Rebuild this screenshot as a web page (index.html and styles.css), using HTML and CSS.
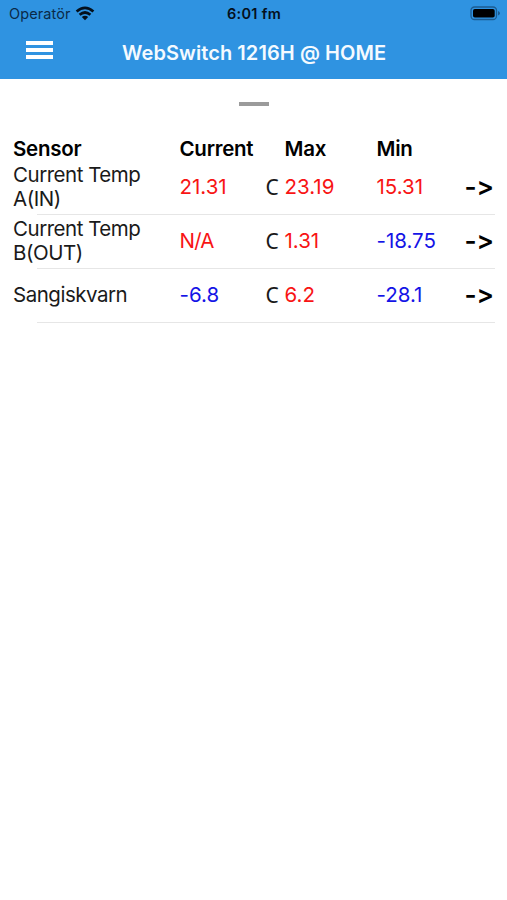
FILE: index.html
```
<!DOCTYPE html>
<html lang="sv">
<head>
    <meta charset="UTF-8">
    <meta name="viewport" content="width=device-width, initial-scale=1.0">
    <title>WebSwitch 1216H</title>
    <link rel="stylesheet" href="styles.css">
</head>
<body>
    <header>
        <div class="status-bar">
            <div class="carrier">
                <span class="carrier-name">Operatör</span>
                <svg class="wifi" width="20" height="16" viewBox="0 0 20 16">
                    <path d="M1.6 5.4Q10 -1.8 18.4 5.4M4.6 8.8Q10 4.2 15.4 8.8" fill="none" stroke="#04101c" stroke-width="2.7"/>
                    <path d="M6.8 11Q10 8.3 13.2 11L10 14.3Z" fill="#04101c"/>
                </svg>
            </div>
            <div class="clock"><span>6:01 fm</span></div>
            <svg class="battery" width="31" height="15" viewBox="0 0 31 15">
                <rect x="1" y="1" width="25.5" height="12.5" rx="3.5" fill="none" stroke="#1c5c91" stroke-width="1.3"/>
                <rect x="3" y="3" width="21.7" height="8.6" rx="1.8" fill="#000"/>
                <path d="M28 5v4.6q2-.8 2-2.3t-2-2.3z" fill="#1c5c91"/>
            </svg>
        </div>
        <nav>
            <a class="menu" href="#"><i></i><i></i><i></i></a>
            <h1><span>WebSwitch 1216H @ HOME</span></h1>
        </nav>
    </header>

    <div class="handle"></div>

    <div class="sensors">
        <div class="row row-head">
            <span class="name"><b>Sensor</b></span>
            <span class="current"><b>Current</b></span>
            <span class="max"><b>Max</b></span>
            <span class="min"><b>Min</b></span>
        </div>
        <div class="row">
            <span class="name">Current Temp A(IN)</span>
            <span class="current hot">21.31</span>
            <span class="unit">C</span>
            <span class="max hot">23.19</span>
            <span class="min hot">15.31</span>
            <a class="more" href="#">-&gt;</a>
        </div>
        <div class="row">
            <span class="name">Current Temp B(OUT)</span>
            <span class="current hot missing">N/A</span>
            <span class="unit">C</span>
            <span class="max hot">1.31</span>
            <span class="min cold">-18.75</span>
            <a class="more" href="#">-&gt;</a>
        </div>
        <div class="row">
            <span class="name">Sangiskvarn</span>
            <span class="current cold">-6.8</span>
            <span class="unit">C</span>
            <span class="max hot">6.2</span>
            <span class="min cold">-28.1</span>
            <a class="more" href="#">-&gt;</a>
        </div>
    </div>
</body>
</html>
```
FILE: styles.css
```
body {
    background-color: #fff;
    font-family: 'Inter', 'Liberation Sans', sans-serif;
    font-size: 20.5px;
    line-height: 24px;
    color: #1a1a1a;
    margin: 0;
    padding: 0;
    font-feature-settings: "calt" 0; /* keep -> as two characters */
}
header {
    background-color: #2f93e1;
    height: 79px;
}
.status-bar {
    display: grid;
    grid-template-columns: 1fr 100px 1fr;
    align-items: center;
    height: 27px;
    padding: 0 6px 0 9px;
    font-size: 14.5px;
    line-height: 27px;
    color: #04101c;
}
.carrier {
    display: flex;
    align-items: center;
    gap: 4px;
    color: #0a2a48;
}
.carrier-name {
    letter-spacing: 0.1px;
}
.clock {
    margin-left: -2px;
    text-align: center;
    font-weight: 600;
    letter-spacing: 0.3px;
}
.battery {
    justify-self: end;
}
nav {
    display: flex;
    align-items: center;
    height: 50px;
    padding-left: 26px;
}
.menu {
    display: flex;
    flex-direction: column;
    gap: 3px;
    width: 27px;
    margin-right: 69px;
    margin-top: -4px;
}
.menu i {
    height: 4.3px;
    background-color: white;
}
h1 {
    margin: 1px 0 0;
    font-size: 20px;
    font-weight: 600;
    letter-spacing: 0.08px;
    color: #f4faff;
}
.handle {
    width: 30px;
    height: 4px;
    margin: 23px auto 29px 239px;
    background-color: #9b9b9b;
}
.row {
    display: grid;
    grid-template-columns: 166px 87px 18px 92px 88px 1fr;
    align-items: center;
    height: 53px;
    padding: 0 12.5px 0 13.5px;
    border-bottom: 1px solid transparent;
    border-image: linear-gradient(to right, transparent 38px, #e6e6e6 38px, #e6e6e6 494px, transparent 494px) 1;
}
.row span {
    margin-top: -1px;
}
.row-head {
    height: 26px;
    border: 0;
    color: #000;
}
.row-head span {
    margin-top: 2px;
}
.row-head b {
    font-weight: 600;
    letter-spacing: -0.25px;
}
.name {
    grid-column: 1;
    margin-left: -0.5px;
    padding-right: 20px;
    letter-spacing: -0.48px;
}
.current {
    grid-column: 2;
}
.missing {
    letter-spacing: -0.8px;
}
.unit {
    grid-column: 3;
    font-family: 'Noto Sans', sans-serif;
    font-size: 21px;
    margin-left: -1px;
}
.max {
    grid-column: 4;
}
.min {
    grid-column: 5;
}
.more {
    grid-column: 6;
    margin-top: -1px;
    font-size: 26px;
    font-weight: 600;
    color: #000;
    text-decoration: none;
}
.hot {
    color: #f81414;
}
.cold {
    color: #1414e6;
}
```
